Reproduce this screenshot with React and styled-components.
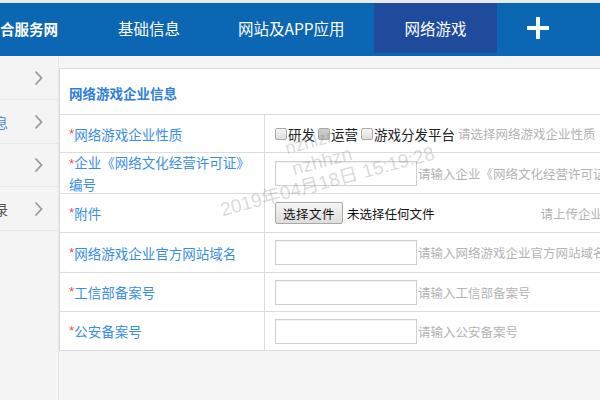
import styled, { createGlobalStyle } from 'styled-components'

const GlobalStyle = createGlobalStyle`
  html, body {
    margin: 0;
    padding: 0;
    overflow: hidden;
    background: #f5f5f5;
  }
  * { box-sizing: border-box; }
`

const CJK = `"Noto Sans CJK SC", "Liberation Sans", sans-serif`

const Page = styled.div`
  position: relative;
  width: 600px;
  height: 400px;
  overflow: hidden;
  background: #f5f5f5;
  font-family: ${CJK};
  border-top: 3px solid #e8ebee;
`

const Header = styled.header`
  display: flex;
  align-items: flex-start;
  height: 53px;
  background: #0b66b4;
  padding-bottom: 3px;
  white-space: nowrap;
`

const Logo = styled.div`
  width: 58px;
  height: 50px;
  display: flex;
  align-items: center;
  justify-content: flex-end;
  overflow: hidden;
  color: #fff;
  font-weight: 700;
  font-size: 14.5px;
  margin-right: 31px;
`

const Tab = styled.div`
  height: 50px;
  display: flex;
  align-items: center;
  padding: 0 ${(p) => (p.$active ? '30px 0 31px' : '29px')};
  color: #fff;
  font-size: 15.5px;
  background: ${(p) => (p.$active ? '#1e4b9b' : 'transparent')};
`

const PlusTab = styled.div`
  height: 50px;
  width: 82px;
  display: flex;
  align-items: center;
  justify-content: center;
`

const Body = styled.div`
  display: flex;
  align-items: flex-start;
`

const Sidebar = styled.aside`
  width: 59px;
  flex-shrink: 0;
  height: 344px;
  background: #f4f4f4;
  border-right: 1px solid #e6e6e6;
  overflow: hidden;
`

const SideItem = styled.div`
  height: ${(p) => p.$h}px;
  display: flex;
  align-items: center;
  justify-content: space-between;
  border-bottom: 1px solid #e8e8e8;
  padding-right: 15px;
  font-size: 13.5px;
  color: ${(p) => (p.$active ? '#4a88d2' : '#555')};
`

const SideLabel = styled.span`
  width: 8px;
  display: flex;
  justify-content: flex-end;
  white-space: nowrap;
`

const Main = styled.main`
  padding-top: 12px;
  width: 560px;
  flex-shrink: 0;
`

const Panel = styled.section`
  width: 620px;
  background: #fff;
  border: 1px solid #dcdcdc;
  border-right: none;
`

const PanelTitle = styled.h2`
  margin: 0;
  height: 46px;
  display: flex;
  align-items: center;
  padding: 3px 0 0 9px;
  font-size: 13.5px;
  font-weight: 700;
  color: #2f80db;
  border-bottom: 1px solid #dcdcdc;
`

const Row = styled.div`
  display: flex;
  height: ${(p) => p.$h}px;
  border-bottom: ${(p) => (p.$last ? 'none' : '1px solid #dcdcdc')};
`

const LabelCell = styled.div`
  width: 205px;
  flex-shrink: 0;
  display: flex;
  align-items: center;
  padding-left: 9px;
  border-right: 1px solid #dcdcdc;
  font-size: 13.5px;
  line-height: 20px;
  color: #3a8ee8;
`

const Star = styled.span`
  color: #f0493c;
  font-family: "Liberation Sans", sans-serif;
`

const ValueCell = styled.div`
  flex: 1;
  display: flex;
  align-items: center;
  padding-left: 10px;
  white-space: nowrap;
  font-size: 13.5px;
  color: #222;
`

const Check = styled.span`
  display: inline-block;
  width: 12px;
  height: 12px;
  margin: 0 1px 0 0;
  border: 1px solid #a8a8a8;
  border-radius: 2px;
  background: ${(p) => (p.$hover ? 'linear-gradient(#cfcfcf, #bdbdbd)' : 'linear-gradient(#f4f4f4, #dedede)')};
  vertical-align: -1px;
`

const CheckLabel = styled.span`
  margin-right: 3px;
`

const Hint = styled.span`
  font-size: 12.5px;
  color: #b3b3b3;
  margin-left: ${(p) => p.$gap || 0}px;
`

const TextInput = styled.div`
  width: 142px;
  height: 25px;
  border: 1px solid #cfcfcf;
  box-shadow: inset 0 1px 1px rgba(0, 0, 0, 0.06);
  background: #fff;
`

const FileButton = styled.span`
  display: inline-flex;
  align-items: center;
  height: 22px;
  padding: 0 7px;
  border: 1px solid #a9a9a9;
  border-radius: 2px;
  background: linear-gradient(#f6f6f6, #dddddd);
  font-size: 12.5px;
  letter-spacing: 0.5px;
  color: #111;
`

const FileName = styled.span`
  font-size: 12.5px;
  margin-left: 4px;
  color: #111;
`

const Watermark = styled.div`
  position: absolute;
  left: 322px;
  top: 158px;
  transform: translate(-50%, -50%) rotate(-15deg);
  display: flex;
  flex-direction: column;
  align-items: center;
  font-family: "Liberation Sans", ${CJK};
  color: rgba(130, 130, 130, 0.3);
  pointer-events: none;
  line-height: 21px;
`

const WmLine = styled.span`
  font-size: ${(p) => p.$size}px;
  white-space: nowrap;
  margin-left: ${(p) => p.$shift || 0}px;
`

const Chevron = () => (
  <svg width="9" height="16" viewBox="0 0 9 16">
    <path d="M1.5 1.5 L7.5 8 L1.5 14.5" fill="none" stroke="#9a9a9a" strokeWidth="1.8" />
  </svg>
)

const sideItems = [
  { h: 44, label: '' },
  { h: 44, label: '企业基本信息', active: true },
  { h: 43, label: '' },
  { h: 44, label: '填报记录' },
]

export default function App() {
  return (
    <Page>
      <GlobalStyle />
      <Header>
        <Logo>合服务网</Logo>
        <Tab>基础信息</Tab>
        <Tab>网站及APP应用</Tab>
        <Tab $active>网络游戏</Tab>
        <PlusTab>
          <svg width="22" height="22" viewBox="0 0 22 22">
            <path d="M11 1 V21 M1 11 H21" stroke="#fff" strokeWidth="4" strokeLinecap="round" />
          </svg>
        </PlusTab>
      </Header>
      <Body>
        <Sidebar>
          {sideItems.map((item, i) => (
            <SideItem key={i} $h={item.h} $active={item.active}>
              <SideLabel>{item.label}</SideLabel>
              <Chevron />
            </SideItem>
          ))}
        </Sidebar>
        <Main>
          <Panel>
            <PanelTitle>网络游戏企业信息</PanelTitle>
            <Row $h={38}>
              <LabelCell><Star>*</Star>网络游戏企业性质</LabelCell>
              <ValueCell>
                <Check /><CheckLabel>研发</CheckLabel>
                <Check $hover /><CheckLabel>运营</CheckLabel>
                <Check /><CheckLabel>游戏分发平台</CheckLabel>
                <Hint>请选择网络游戏企业性质</Hint>
              </ValueCell>
            </Row>
            <Row $h={41}>
              <LabelCell>
                <span><Star>*</Star>企业《网络文化经营许可证》<br />编号</span>
              </LabelCell>
              <ValueCell>
                <TextInput />
                <Hint $gap={1}>请输入企业《网络文化经营许可证》编号</Hint>
              </ValueCell>
            </Row>
            <Row $h={39}>
              <LabelCell><Star>*</Star>附件</LabelCell>
              <ValueCell>
                <FileButton>选择文件</FileButton>
                <FileName>未选择任何文件</FileName>
                <Hint $gap={106}>请上传企业相关附件</Hint>
              </ValueCell>
            </Row>
            <Row $h={40}>
              <LabelCell><Star>*</Star>网络游戏企业官方网站域名</LabelCell>
              <ValueCell>
                <TextInput />
                <Hint $gap={1}>请输入网络游戏企业官方网站域名</Hint>
              </ValueCell>
            </Row>
            <Row $h={39}>
              <LabelCell><Star>*</Star>工信部备案号</LabelCell>
              <ValueCell>
                <TextInput />
                <Hint $gap={1}>请输入工信部备案号</Hint>
              </ValueCell>
            </Row>
            <Row $h={38} $last>
              <LabelCell><Star>*</Star>公安备案号</LabelCell>
              <ValueCell>
                <TextInput />
                <Hint $gap={1}>请输入公安备案号</Hint>
              </ValueCell>
            </Row>
          </Panel>
        </Main>
      </Body>
      <Watermark>
        <WmLine $size={18} $shift={-12}>nzhlzn</WmLine>
        <WmLine $size={19}>nzhhzn</WmLine>
        <WmLine $size={19}>2019年04月18日 15:19:28</WmLine>
      </Watermark>
    </Page>
  )
}
